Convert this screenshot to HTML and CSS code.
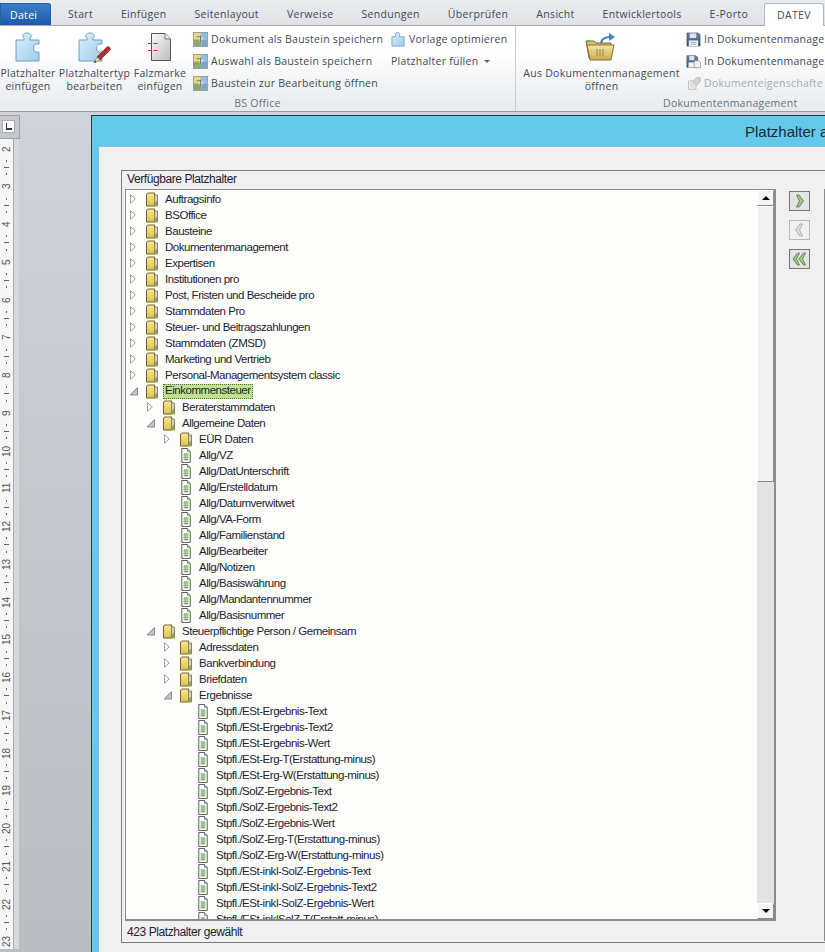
FILE: index.html
```html
<!DOCTYPE html>
<html lang="de">
<head>
    <meta charset="UTF-8">
    <title>Platzhalter</title>
    <link rel="stylesheet" href="styles.css">
</head>
<body>
    <!-- icons -->
    <svg class="defs" width="0" height="0">
        <defs>
            <linearGradient id="gBlue" x1="0" y1="0" x2="1" y2="1"><stop offset="0" stop-color="#dff0fb"/><stop offset="1" stop-color="#9ccbec"/></linearGradient>
            <linearGradient id="gPage" x1="0" y1="0" x2="1" y2="1"><stop offset="0" stop-color="#fafafa"/><stop offset="1" stop-color="#bdbdbd"/></linearGradient>
            <linearGradient id="gFold" x1="0" y1="0" x2="0" y2="1"><stop offset="0" stop-color="#f8ea8e"/><stop offset="1" stop-color="#e0c050"/></linearGradient>
            <linearGradient id="gBig" x1="0" y1="0" x2="0" y2="1"><stop offset="0" stop-color="#f3e6a8"/><stop offset="1" stop-color="#c9a850"/></linearGradient>
            <linearGradient id="gDisk" x1="0" y1="0" x2="0" y2="1"><stop offset="0" stop-color="#6b83a3"/><stop offset="1" stop-color="#3d5272"/></linearGradient>
        </defs>
        <symbol id="puzzle" viewBox="0 0 26 30">
            <path d="M1 8H9V6C7 5 7 1 12 1C17 1 17 5 15 6V8H24V12H21C18 12 18 20 21 20H24V29H1Z" fill="url(#gBlue)" stroke="#6f9fc2"/>
        </symbol>
        <symbol id="pencil" viewBox="0 0 20 20">
            <path d="M5 12L15 2C17 1 19 3 18 5L8 15Z" fill="#b4302e" stroke="#7a1f1f" stroke-width=".7"/>
            <path d="M5 12L8 15L2 18Z" fill="#e8d8b8" stroke="#8a7a60" stroke-width=".6"/>
            <path d="M2 18L3 15.500L4.500 17Z" fill="#333"/>
        </symbol>
        <symbol id="falz" viewBox="0 0 24 30">
            <path d="M3.500 1.500H17L22.500 7V28.500H3.500Z" fill="url(#gPage)" stroke="#555"/>
            <path d="M17 1.500V7H22.500" fill="#eee" stroke="#777"/>
            <path d="M0 11.500H11M0 18.500H11" stroke="#c8282a" stroke-dasharray="4 1.500" fill="none"/>
        </symbol>
        <symbol id="bricks" viewBox="0 0 16 16">
            <rect x=".5" y=".5" width="15" height="15" fill="#dfe3e6" stroke="#9a9c92"/>
            <path d="M1 1H8V4H6V7H8V8H1Z" fill="#efd96a"/>
            <path d="M8 1H15V8H11V6H8Z" fill="#8fc0e6"/>
            <path d="M1 8H7V10H9V15H1Z" fill="#88a878"/>
            <path d="M9 8H15V15H9Z" fill="#7fa6c8"/>
            <path d="M4 5H8M8 4V11" stroke="#6b7a5e" fill="none"/>
        </symbol>
        <symbol id="vorlage" viewBox="0 0 16 16">
            <path d="M1 5H5V3C4 2 5 .5 7 .5C9 .5 10 2 9 3V5H14V15H1Z" fill="url(#gBlue)" stroke="#7aa6c6"/>
        </symbol>
        <symbol id="openfolder" viewBox="0 0 32 30">
            <path d="M2 9H10L12 11H27V26H5Z" fill="#d8c070" stroke="#7d6a2c"/>
            <path d="M3 13H30L27 28H6Z" fill="url(#gBig)" stroke="#8a7434"/>
            <path d="M13 17V24M16 17V24M19 17V24" stroke="#a08a3c" fill="none"/>
            <rect x="3" y="8" width="3" height="2" fill="#6fb04a"/>
            <path d="M17 11C18 6 22 5 26 5" stroke="#3f7fa8" stroke-width="2" fill="none"/>
            <path d="M25 1L31 5L25 9Z" fill="#3f88b8"/>
        </symbol>
        <symbol id="disk" viewBox="0 0 16 16">
            <path d="M1 1H13L15 3V15H1Z" fill="url(#gDisk)" stroke="#34465f" stroke-width=".6"/>
            <rect x="4" y="1.500" width="7" height="5" fill="#dfe5ec"/>
            <rect x="3" y="9" width="10" height="6" fill="#eef1f4"/>
            <path d="M5 11H11M5 13H11" stroke="#9aa6b4" fill="none"/>
        </symbol>
        <symbol id="diskdoc" viewBox="0 0 18 16">
            <path d="M1 1H12L14 3V15H1Z" fill="url(#gDisk)" stroke="#34465f" stroke-width=".6"/>
            <rect x="4" y="1.500" width="6" height="5" fill="#dfe5ec"/>
            <rect x="3" y="9" width="8" height="6" fill="#eef1f4"/>
            <path d="M10 7H15L17.500 9.500V15.500H10Z" fill="#f2f2f2" stroke="#777" stroke-width=".7"/>
        </symbol>
        <symbol id="props" viewBox="0 0 18 16">
            <path d="M3 5H12V15H3Z" fill="#eee" stroke="#bbb"/>
            <path d="M5 8H10M5 10H10M5 12H10" stroke="#ccc" fill="none"/>
            <path d="M8 6L13 1H17V6L13 10Z" fill="#d4d4d4" stroke="#b5b5b5"/>
        </symbol>
        <symbol id="closed" viewBox="0 0 10 10">
            <path d="M.5 .7L5.300 5L.5 9.300Z" fill="#fff" stroke="#a0a0a0"/>
        </symbol>
        <symbol id="opened" viewBox="0 0 10 10">
            <path d="M7.500 1.500V9H0Z" fill="#c4c4c4" stroke="#8c8c8c"/>
        </symbol>
        <symbol id="folder" viewBox="0 0 12 14">
            <path d="M.5 1.500L2 .5H8.500V13.500H.5Z" fill="url(#gFold)" stroke="#6e6232"/>
            <path d="M8.500 2.500H11.500V13.500H8.500Z" fill="#d8d4b8" stroke="#8b8260"/>
            <path d="M9 10L11 8V13H9Z" fill="#7fb040"/>
        </symbol>
        <symbol id="doc" viewBox="0 0 12 16">
            <path d="M1.500 .5H7.500L10.500 3.500V15.500H1.500Z" fill="#fdfdfd" stroke="#555"/>
            <path d="M7.500 .5V3.500H10.500" fill="#ddd" stroke="#777"/>
            <path d="M3.500 6.500H8.500M3.500 8.500H8.500M3.500 10.500H8.500M3.500 12.500H8.500" stroke="#3f8a1c" fill="none"/>
        </symbol>
        <symbol id="right" viewBox="0 0 19 18">
            <path d="M6.500 3H9L13.500 9L9 15H6.500L9.500 9Z" fill="#a9c394" stroke="#66884e"/>
        </symbol>
        <symbol id="left" viewBox="0 0 19 18">
            <path d="M12.500 3H10L5.500 9L10 15H12.500L9.500 9Z" fill="#e0e0e0" stroke="#aaa"/>
        </symbol>
        <symbol id="leftall" viewBox="0 0 19 18">
            <path d="M9.500 3H7.500L3 9L7.500 15H9.500L6.500 9Z" fill="#a9c394" stroke="#66884e"/>
            <path d="M15.500 3H13.500L9 9L13.500 15H15.500L12.500 9Z" fill="#a9c394" stroke="#66884e"/>
        </symbol>
    </svg>

    <ul class="tabs">
        <li class="datei">Datei</li>
        <li>Start</li>
        <li>Einfügen</li>
        <li>Seitenlayout</li>
        <li>Verweise</li>
        <li>Sendungen</li>
        <li>Überprüfen</li>
        <li>Ansicht</li>
        <li>Entwicklertools</li>
        <li>E-Porto</li>
        <li class="cur">DATEV</li>
    </ul>

    <div class="ribbon">
        <section class="group bs">
            <div class="group-body">
                <div class="big w54"><svg class="ic-big puzzle"><use href="#puzzle"/></svg><span>Platzhalter<br>einfügen</span></div>
                <div class="big w69"><span class="ic-stack"><svg class="ic-big puzzle"><use href="#puzzle"/></svg><svg class="pencil"><use href="#pencil"/></svg></span><span>Platzhaltertyp<br>bearbeiten</span></div>
                <div class="big w50"><svg class="ic-big falz"><use href="#falz"/></svg><span>Falzmarke<br>einfügen</span></div>
                <div class="small-col first">
                    <div class="small"><svg class="ic"><use href="#bricks"/></svg>Dokument als Baustein speichern</div>
                    <div class="small"><svg class="ic"><use href="#bricks"/></svg>Auswahl als Baustein speichern</div>
                    <div class="small"><svg class="ic"><use href="#bricks"/></svg>Baustein zur Bearbeitung öffnen</div>
                </div>
                <div class="small-col second">
                    <div class="small"><svg class="ic"><use href="#vorlage"/></svg>Vorlage optimieren</div>
                    <div class="small">Platzhalter füllen<i class="caret"></i></div>
                </div>
            </div>
            <div class="group-label">BS Office</div>
        </section>
        <section class="group dms">
            <div class="group-body">
                <div class="big wide"><svg class="ic-big openfolder"><use href="#openfolder"/></svg><span>Aus Dokumentenmanagement<br>öffnen</span></div>
                <div class="small-col third">
                    <div class="small"><svg class="ic"><use href="#disk"/></svg>In Dokumentenmanage</div>
                    <div class="small"><svg class="ic"><use href="#diskdoc"/></svg>In Dokumentenmanage</div>
                    <div class="small off"><svg class="ic"><use href="#props"/></svg>Dokumenteigenschafte</div>
                </div>
            </div>
            <div class="group-label">Dokumentenmanagement</div>
        </section>
    </div>

    <div class="work">
        <aside class="side">
            <div class="corner"><b></b></div>
            <div class="ruler">
                <div class="mark"><em>2</em><i></i><u></u><i></i></div>
                <div class="mark"><em>3</em><i></i><u></u><i></i></div>
                <div class="mark"><em>4</em><i></i><u></u><i></i></div>
                <div class="mark"><em>5</em><i></i><u></u><i></i></div>
                <div class="mark"><em>6</em><i></i><u></u><i></i></div>
                <div class="mark"><em>7</em><i></i><u></u><i></i></div>
                <div class="mark"><em>8</em><i></i><u></u><i></i></div>
                <div class="mark"><em>9</em><i></i><u></u><i></i></div>
                <div class="mark"><em>10</em><i></i><u></u><i></i></div>
                <div class="mark"><em>11</em><i></i><u></u><i></i></div>
                <div class="mark"><em>12</em><i></i><u></u><i></i></div>
                <div class="mark"><em>13</em><i></i><u></u><i></i></div>
                <div class="mark"><em>14</em><i></i><u></u><i></i></div>
                <div class="mark"><em>15</em><i></i><u></u><i></i></div>
                <div class="mark"><em>16</em><i></i><u></u><i></i></div>
                <div class="mark"><em>17</em><i></i><u></u><i></i></div>
                <div class="mark"><em>18</em><i></i><u></u><i></i></div>
                <div class="mark"><em>19</em><i></i><u></u><i></i></div>
                <div class="mark"><em>20</em><i></i><u></u><i></i></div>
                <div class="mark"><em>21</em><i></i><u></u><i></i></div>
                <div class="mark"><em>22</em><i></i><u></u><i></i></div>
                <div class="mark"><em>23</em><i></i><u></u><i></i></div>
            </div>
        </aside>

        <main class="dialog">
            <div class="dialog-title">Platzhalter a</div>
            <div class="dialog-body">
                <div class="avail">
                    <div class="avail-title">Verfügbare Platzhalter</div>
                    <div class="avail-main">
                        <div class="treebox">
                            <ul class="tree">
                                <li class="row"><svg class="arrow"><use href="#closed"/></svg><svg class="fold"><use href="#folder"/></svg><span>Auftragsinfo</span></li>
                                <li class="row"><svg class="arrow"><use href="#closed"/></svg><svg class="fold"><use href="#folder"/></svg><span>BSOffice</span></li>
                                <li class="row"><svg class="arrow"><use href="#closed"/></svg><svg class="fold"><use href="#folder"/></svg><span>Bausteine</span></li>
                                <li class="row"><svg class="arrow"><use href="#closed"/></svg><svg class="fold"><use href="#folder"/></svg><span>Dokumentenmanagement</span></li>
                                <li class="row"><svg class="arrow"><use href="#closed"/></svg><svg class="fold"><use href="#folder"/></svg><span>Expertisen</span></li>
                                <li class="row"><svg class="arrow"><use href="#closed"/></svg><svg class="fold"><use href="#folder"/></svg><span>Institutionen pro</span></li>
                                <li class="row"><svg class="arrow"><use href="#closed"/></svg><svg class="fold"><use href="#folder"/></svg><span>Post, Fristen und Bescheide pro</span></li>
                                <li class="row"><svg class="arrow"><use href="#closed"/></svg><svg class="fold"><use href="#folder"/></svg><span>Stammdaten Pro</span></li>
                                <li class="row"><svg class="arrow"><use href="#closed"/></svg><svg class="fold"><use href="#folder"/></svg><span>Steuer- und Beitragszahlungen</span></li>
                                <li class="row"><svg class="arrow"><use href="#closed"/></svg><svg class="fold"><use href="#folder"/></svg><span>Stammdaten (ZMSD)</span></li>
                                <li class="row"><svg class="arrow"><use href="#closed"/></svg><svg class="fold"><use href="#folder"/></svg><span>Marketing und Vertrieb</span></li>
                                <li class="row"><svg class="arrow"><use href="#closed"/></svg><svg class="fold"><use href="#folder"/></svg><span>Personal-Managementsystem classic</span></li>
                                <li class="row"><svg class="arrow"><use href="#opened"/></svg><svg class="fold"><use href="#folder"/></svg><span class="sel">Einkommensteuer</span></li>
                                <li class="row d1"><svg class="arrow"><use href="#closed"/></svg><svg class="fold"><use href="#folder"/></svg><span>Beraterstammdaten</span></li>
                                <li class="row d1"><svg class="arrow"><use href="#opened"/></svg><svg class="fold"><use href="#folder"/></svg><span>Allgemeine Daten</span></li>
                                <li class="row d2"><svg class="arrow"><use href="#closed"/></svg><svg class="fold"><use href="#folder"/></svg><span>EÜR Daten</span></li>
                                <li class="row d2 leaf"><svg class="fold"><use href="#doc"/></svg><span>Allg/VZ</span></li>
                                <li class="row d2 leaf"><svg class="fold"><use href="#doc"/></svg><span>Allg/DatUnterschrift</span></li>
                                <li class="row d2 leaf"><svg class="fold"><use href="#doc"/></svg><span>Allg/Erstelldatum</span></li>
                                <li class="row d2 leaf"><svg class="fold"><use href="#doc"/></svg><span>Allg/Datumverwitwet</span></li>
                                <li class="row d2 leaf"><svg class="fold"><use href="#doc"/></svg><span>Allg/VA-Form</span></li>
                                <li class="row d2 leaf"><svg class="fold"><use href="#doc"/></svg><span>Allg/Familienstand</span></li>
                                <li class="row d2 leaf"><svg class="fold"><use href="#doc"/></svg><span>Allg/Bearbeiter</span></li>
                                <li class="row d2 leaf"><svg class="fold"><use href="#doc"/></svg><span>Allg/Notizen</span></li>
                                <li class="row d2 leaf"><svg class="fold"><use href="#doc"/></svg><span>Allg/Basiswährung</span></li>
                                <li class="row d2 leaf"><svg class="fold"><use href="#doc"/></svg><span>Allg/Mandantennummer</span></li>
                                <li class="row d2 leaf"><svg class="fold"><use href="#doc"/></svg><span>Allg/Basisnummer</span></li>
                                <li class="row d1"><svg class="arrow"><use href="#opened"/></svg><svg class="fold"><use href="#folder"/></svg><span>Steuerpflichtige Person / Gemeinsam</span></li>
                                <li class="row d2"><svg class="arrow"><use href="#closed"/></svg><svg class="fold"><use href="#folder"/></svg><span>Adressdaten</span></li>
                                <li class="row d2"><svg class="arrow"><use href="#closed"/></svg><svg class="fold"><use href="#folder"/></svg><span>Bankverbindung</span></li>
                                <li class="row d2"><svg class="arrow"><use href="#closed"/></svg><svg class="fold"><use href="#folder"/></svg><span>Briefdaten</span></li>
                                <li class="row d2"><svg class="arrow"><use href="#opened"/></svg><svg class="fold"><use href="#folder"/></svg><span>Ergebnisse</span></li>
                                <li class="row d3 leaf"><svg class="fold"><use href="#doc"/></svg><span>Stpfl./ESt-Ergebnis-Text</span></li>
                                <li class="row d3 leaf"><svg class="fold"><use href="#doc"/></svg><span>Stpfl./ESt-Ergebnis-Text2</span></li>
                                <li class="row d3 leaf"><svg class="fold"><use href="#doc"/></svg><span>Stpfl./ESt-Ergebnis-Wert</span></li>
                                <li class="row d3 leaf"><svg class="fold"><use href="#doc"/></svg><span>Stpfl./ESt-Erg-T(Erstattung-minus)</span></li>
                                <li class="row d3 leaf"><svg class="fold"><use href="#doc"/></svg><span>Stpfl./ESt-Erg-W(Erstattung-minus)</span></li>
                                <li class="row d3 leaf"><svg class="fold"><use href="#doc"/></svg><span>Stpfl./SolZ-Ergebnis-Text</span></li>
                                <li class="row d3 leaf"><svg class="fold"><use href="#doc"/></svg><span>Stpfl./SolZ-Ergebnis-Text2</span></li>
                                <li class="row d3 leaf"><svg class="fold"><use href="#doc"/></svg><span>Stpfl./SolZ-Ergebnis-Wert</span></li>
                                <li class="row d3 leaf"><svg class="fold"><use href="#doc"/></svg><span>Stpfl./SolZ-Erg-T(Erstattung-minus)</span></li>
                                <li class="row d3 leaf"><svg class="fold"><use href="#doc"/></svg><span>Stpfl./SolZ-Erg-W(Erstattung-minus)</span></li>
                                <li class="row d3 leaf"><svg class="fold"><use href="#doc"/></svg><span>Stpfl./ESt-inkl-SolZ-Ergebnis-Text</span></li>
                                <li class="row d3 leaf"><svg class="fold"><use href="#doc"/></svg><span>Stpfl./ESt-inkl-SolZ-Ergebnis-Text2</span></li>
                                <li class="row d3 leaf"><svg class="fold"><use href="#doc"/></svg><span>Stpfl./ESt-inkl-SolZ-Ergebnis-Wert</span></li>
                                <li class="row d3 leaf"><svg class="fold"><use href="#doc"/></svg><span>Stpfl./ESt-inklSolZ-T(Erstatt-minus)</span></li>
                            </ul>
                            <div class="scrollbar">
                                <div class="sbtn"><i class="up"></i></div>
                                <div class="thumb"></div>
                                <div class="track"></div>
                                <div class="sbtn"><i class="down"></i></div>
                            </div>
                        </div>
                        <div class="moves">
                            <div class="move"><svg><use href="#right"/></svg></div>
                            <div class="move off"><svg><use href="#left"/></svg></div>
                            <div class="move"><svg><use href="#leftall"/></svg></div>
                        </div>
                        <div class="next-panel"></div>
                    </div>
                    <div class="avail-foot">423 Platzhalter gewählt</div>
                </div>
            </div>
        </main>
    </div>
</body>
</html>
```

FILE: styles.css
```css
*{
    margin: 0;
    padding: 0;
    list-style: none;
    box-sizing: border-box;
}
html,body{
    width: 825px;
    height: 952px;
    overflow: hidden;
}
body{
    font-family: "Liberation Sans", Arial, sans-serif;
    background: #c8cbd1;
}
.defs{
    position: absolute;
}

/* tabs */
.tabs{
    display: flex;
    height: 26px;
    padding-top: 3px;
    background: linear-gradient(#e9ecef, #dfe3e7);
    border-bottom: 1px solid #a4a8ab;
    font-family: "Open Sans", sans-serif;
    font-size: 10.500px;
    letter-spacing: .32px;
    color: #3e4a58;
    white-space: nowrap;
}
.tabs li{
    padding: 0 14px;
    line-height: 22px;
}
.tabs .datei{
    width: 51px;
    padding: 0 0 0 9px;
    margin-right: 3px;
    color: #fff;
    background: linear-gradient(#3c7fc9, #1d5aa8);
    border: 1px solid #2a5f9e;
    border-bottom: 0;
    border-radius: 0 3px 0 0;
}
.tabs .cur{
    height: 23px;
    padding: 0 12px;
    margin-left: 2px;
    background: #fff;
    border: 1px solid #b4b8bb;
    border-bottom: 0;
    border-radius: 3px 3px 0 0;
}

/* ribbon */
.ribbon{
    display: flex;
    height: 86px;
    background: linear-gradient(#fff 30%, #e8eaed);
    border-bottom: 1px solid #9a9da1;
    font-family: "Open Sans", sans-serif;
    font-size: 10.500px;
    letter-spacing: .26px;
    color: #3e4a58;
    white-space: nowrap;
}
.group{
    display: flex;
    flex-direction: column;
    flex-shrink: 0;
}
.group.bs{
    width: 516px;
    border-right: 1px solid #c8ccd0;
}
.group.dms{
    flex: 1;
    min-width: 0;
}
.group-body{
    display: flex;
    height: 70px;
    padding-top: 2px;
}
.group-label{
    text-align: center;
    line-height: 14px;
    color: #68727e;
}
.dms .group-label{
    padding-left: 147px;
    text-align: left;
}
.big{
    display: flex;
    flex-direction: column;
    align-items: center;
    flex-shrink: 0;
    padding-top: 4px;
    text-align: center;
    line-height: 13px;
}
.big > span:last-child{
    margin-top: auto;
    padding-bottom: 3px;
}
.bs .big:first-child{
    margin-left: 1px;
}
.w54{ width: 54px; }
.w69{ width: 69px; margin-left: 5px; }
.w50{ width: 50px; margin-left: 6px; }
.wide{ width: 157px; margin-left: 7px; }
.ic-big{
    display: block;
}
.puzzle{
    width: 26px;
    height: 30px;
}
.falz{
    width: 24px;
    height: 30px;
}
.openfolder{
    width: 32px;
    height: 30px;
    margin-right: 3px;
}
.ic-stack{
    position: relative;
    display: block;
    margin-right: 8px;
}
.pencil{
    position: absolute;
    left: 14px;
    top: 13px;
    width: 20px;
    height: 20px;
}
.small-col.first{
    margin-left: 8px;
    width: 198px;
}
.small-col.third{
    margin-left: 6px;
}
.small{
    display: flex;
    align-items: center;
    height: 22px;
}
.small .ic{
    width: 15px;
    height: 15px;
    margin-right: 3px;
    flex-shrink: 0;
}
.small.off{
    color: #a6abb0;
}
.caret{
    width: 0;
    height: 0;
    margin-left: 6px;
    border: 3px solid transparent;
    border-top-color: #666;
    border-bottom: 0;
}

/* left ruler and dialog */
.work{
    display: flex;
    height: 840px;
    padding-top: 3px;
    background: linear-gradient(#cfd2d8, #b9bcc1);
}
.side{
    width: 91px;
    flex-shrink: 0;
}
.corner{
    width: 20px;
    height: 24px;
    padding: 4px 0 0 2px;
    background: #c4c7cc;
    border: 1px solid #9ea2a6;
    border-left: 0;
}
.corner b{
    display: block;
    width: 13px;
    height: 13px;
    background: #fff;
    border: 1px solid #a8abaf;
    position: relative;
}
.corner b::after{
    content: "";
    position: absolute;
    left: 3px;
    top: 2px;
    width: 5px;
    height: 5px;
    border-left: 1px solid #333;
    border-bottom: 2px solid #333;
}
.ruler{
    width: 19px;
    height: 810px;
    padding-top: 1px;
    overflow: hidden;
    background: linear-gradient(90deg, #f6f6f6 0, #f6f6f6 13px, #a9adb2 13px, #a9adb2 14px, #d6d8dc 14px);
}
.mark{
    display: flex;
    flex-direction: column;
    align-items: center;
    justify-content: space-around;
    width: 13px;
    height: 37.750px;
}
.mark em{
    height: 12px;
    font: normal 10px/13px "Liberation Sans", sans-serif;
    color: #555;
    writing-mode: vertical-rl;
    transform: rotate(180deg);
    text-align: center;
}
.mark i{
    width: 1px;
    height: 2px;
    background: #666;
}
.mark u{
    width: 5px;
    height: 1px;
    background: #666;
}
.dialog{
    flex: 1;
    min-width: 0;
    display: flex;
    flex-direction: column;
    background: #64c8ea;
    border: 1px solid #2c3a42;
    border-width: 1px 0 0 1px;
    padding-left: 7px;
}
.dialog-title{
    height: 30px;
    padding-left: 646px;
    font-size: 15px;
    line-height: 31px;
    color: #1a2a30;
    white-space: nowrap;
}
.dialog-body{
    flex: 1;
    padding: 23px 0 0 22px;
    background: #f0f0f0;
    border-top: 1px solid #9fb8c4;
}
.avail{
    height: 773px;
    display: flex;
    flex-direction: column;
    padding: 0 0 0 3px;
    border: 1px solid #7d7d7d;
    border-right: 0;
    font-size: 12px;
    letter-spacing: -.42px;
    color: #1c2430;
}
.avail-title{
    height: 19px;
    padding-left: 2px;
    line-height: 17px;
}
.avail-main{
    display: flex;
    height: 732px;
}
.treebox{
    display: flex;
    width: 651px;
    flex-shrink: 0;
    background: #fdfdfb;
    border: 1px solid #8c8c8c;
    border-right-width: 2px;
    border-bottom-width: 2px;
}
.tree{
    flex: 1;
    min-width: 0;
    padding-top: 1px;
    overflow: hidden;
    font-size: 11.500px;
    letter-spacing: -.47px;
}
.row{
    display: flex;
    align-items: center;
    height: 16px;
    white-space: nowrap;
}
.d1{ padding-left: 17px; }
.d2{ padding-left: 34px; }
.d3{ padding-left: 51px; }
.leaf{ margin-left: 20px; }
.arrow{
    width: 10px;
    height: 10px;
    margin: 0 6px 0 4px;
    flex-shrink: 0;
}
.fold{
    width: 12px;
    height: 15px;
    margin-right: 7px;
    flex-shrink: 0;
}
.row .sel{
    margin: -1px 0 -1px -2px;
    padding: 0 2px;
    line-height: 13px;
    height: 15px;
    background: #bfe28a;
    outline: 1px dotted #5a6a40;
    outline-offset: -1px;
}

/* scrollbar */
.scrollbar{
    display: flex;
    flex-direction: column;
    width: 17px;
    flex-shrink: 0;
    background: #e3e3e3;
}
.sbtn{
    display: flex;
    align-items: center;
    justify-content: center;
    height: 16px;
    background: #f4f4f4;
    border: 1px solid #fff;
    border-right-color: #8a8a8a;
    border-bottom-color: #8a8a8a;
}
.up,.down{
    width: 0;
    height: 0;
    border: 4px solid transparent;
}
.up{
    border-bottom-color: #000;
    border-top: 0;
}
.down{
    border-top-color: #000;
    border-bottom: 0;
}
.thumb{
    height: 276px;
    background: #f0f0f0;
    border: 1px solid #fff;
    border-right-color: #8a8a8a;
    border-bottom-color: #8a8a8a;
}
.track{
    flex: 1;
}

/* move buttons */
.moves{
    width: 21px;
    margin: 2px 14px 0 13px;
    flex-shrink: 0;
}
.move{
    width: 21px;
    height: 20px;
    margin-bottom: 9px;
    background: #e4e4e4;
    border: 1px solid #767676;
}
.move.off{
    background: #f0f0f0;
    border-color: #b8b8b8;
}
.move svg{
    display: block;
    width: 19px;
    height: 18px;
}
.next-panel{
    width: 1px;
    height: 752px;
    background: #8a8a8a;
}
.avail-foot{
    line-height: 20px;
    padding: 1px 0 0 2px;
}
```
